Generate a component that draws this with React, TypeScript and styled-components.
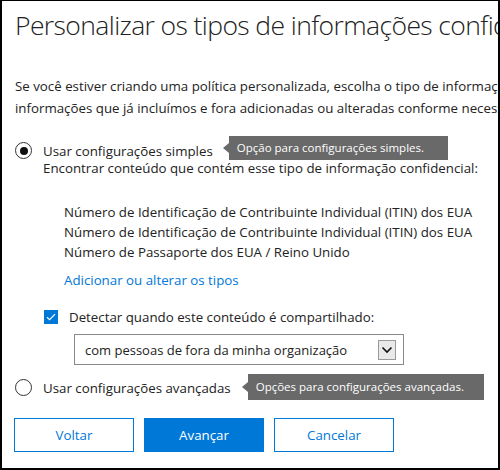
import React from "react";
import styled, { createGlobalStyle } from "styled-components";

const GlobalStyle = createGlobalStyle`
  html, body { margin: 0; padding: 0; background: #fff; }
  body { font-family: "Open Sans", "Noto Sans", sans-serif; overflow: hidden; }
  * { box-sizing: border-box; }
`;

const Frame = styled.div`
  width: 500px;
  height: 470px;
  border: 2px solid #000;
  border-top-width: 1px;
  background: #fff;
  overflow: hidden;
  padding-left: 13px;
  color: #222;
  font-size: 13.3px;
`;

const Title = styled.h1`
  margin: 4px 0 0 0;
  font-weight: 300;
  font-size: 26.5px;
  letter-spacing: -0.6px;
  line-height: 40px;
  white-space: nowrap;
  color: #222;
`;

const Intro = styled.p`
  margin: 30px 0 0 0;
  line-height: 22px;
  white-space: nowrap;
`;

const Line = styled.span`
  display: block;
`;

const OptionBlock = styled.div<{ $top: number }>`
  display: flex;
  align-items: flex-start;
  gap: 11px;
  margin-top: ${(p) => p.$top}px;
`;

const Radio = styled.span<{ $checked?: boolean }>`
  flex: none;
  width: 17px;
  height: 17px;
  border: 1.5px solid #333;
  border-radius: 50%;
  display: flex;
  align-items: center;
  justify-content: center;
  &::after {
    content: "";
    display: ${(p) => (p.$checked ? "block" : "none")};
    width: 8px;
    height: 8px;
    border-radius: 50%;
    background: #111;
  }
`;

const OptionBody = styled.div`
  display: flex;
  flex-direction: column;
  align-items: flex-start;
`;

const OptionLabel = styled.span`
  position: relative;
  line-height: 18px;
  white-space: nowrap;
`;

const Tooltip = styled.span<{ $gap: number; $h: number; $shift: number; $padRight: number }>`
  position: absolute;
  left: calc(100% + ${(p) => p.$gap}px);
  top: 50%;
  transform: translateY(calc(-50% + ${(p) => p.$shift}px));
  height: ${(p) => p.$h}px;
  padding: 0 ${(p) => p.$padRight}px 0 8px;
  background: #696969;
  color: #fff;
  font-size: 11.5px;
  line-height: ${(p) => p.$h}px;
  white-space: nowrap;
  &::before {
    content: "";
    position: absolute;
    left: -6px;
    top: 50%;
    transform: translateY(-50%);
    border-style: solid;
    border-width: 5px 6px 5px 0;
    border-color: transparent #696969 transparent transparent;
  }
`;

const Description = styled.span`
  line-height: 16px;
  white-space: nowrap;
`;

const TypeList = styled.ul`
  list-style: none;
  margin: 26px 0 0 21px;
  padding: 0;
  line-height: 20px;
  white-space: nowrap;
`;

const Link = styled.a`
  margin: 8px 0 0 21px;
  line-height: 20px;
  color: #0078d7;
  text-decoration: none;
`;

const CheckRow = styled.label`
  display: flex;
  align-items: center;
  gap: 11px;
  margin: 17px 0 0 1px;
  line-height: 20px;
  white-space: nowrap;
`;

const CheckBox = styled.span`
  width: 14px;
  height: 14px;
  background: #0078d7;
  display: flex;
  align-items: center;
  justify-content: center;
`;

const Select = styled.div`
  margin: 7px 0 0 31px;
  width: 330px;
  height: 31px;
  border: 1px solid #8a8a8a;
  display: flex;
  align-items: center;
  justify-content: space-between;
  padding: 0 7px 0 10px;
  font-size: 13px;
  white-space: nowrap;
`;

const SelectArrow = styled.span`
  width: 18px;
  height: 20px;
  border: 1px solid #9a9a9a;
  background: #e9e9e9;
  display: flex;
  align-items: center;
  justify-content: center;
`;

const ButtonRow = styled.div`
  display: flex;
  gap: 10px;
  margin: 21px 0 0 -1px;
`;

const Button = styled.button<{ $primary?: boolean }>`
  width: 120px;
  height: 34px;
  border: 1px solid #0078d7;
  background: ${(p) => (p.$primary ? "#0078d7" : "#fff")};
  color: ${(p) => (p.$primary ? "#fff" : "#0078d7")};
  font-family: "Open Sans", "Noto Sans", sans-serif;
  font-size: 13.3px;
  padding: 0;
  cursor: pointer;
`;

export default function App() {
  return (
    <>
      <GlobalStyle />
      <Frame>
        <Title>Personalizar os tipos de informações confidenciais</Title>
        <Intro>
          <Line>
            Se você estiver criando uma política personalizada, escolha o tipo de informação confidencial
          </Line>
          <Line>
            informações que já incluímos e fora adicionadas ou alteradas conforme necessário.
          </Line>
        </Intro>

        <OptionBlock $top={23}>
          <Radio $checked />
          <OptionBody>
            <OptionLabel>
              Usar configurações simples
              <Tooltip $gap={16} $h={24} $shift={-3} $padRight={24}>
                Opção para configurações simples.
              </Tooltip>
            </OptionLabel>
            <Description>
              Encontrar conteúdo que contém esse tipo de informação confidencial:
            </Description>
            <TypeList>
              <li>Número de Identificação de Contribuinte Individual (ITIN) dos EUA</li>
              <li>Número de Identificação de Contribuinte Individual (ITIN) dos EUA</li>
              <li>Número de Passaporte dos EUA / Reino Unido</li>
            </TypeList>
            <Link href="#">Adicionar ou alterar os tipos</Link>
            <CheckRow>
              <CheckBox>
                <svg width="10" height="8" viewBox="0 0 10 8">
                  <path d="M1 4.2 L3.6 6.6 L9 1.2" fill="none" stroke="#fff" strokeWidth="1.2" />
                </svg>
              </CheckBox>
              Detectar quando este conteúdo é compartilhado:
            </CheckRow>
            <Select>
              <span>com pessoas de fora da minha organização</span>
              <SelectArrow>
                <svg width="12" height="8" viewBox="0 0 12 8">
                  <path d="M1.5 1.5 L6 6 L10.5 1.5" fill="none" stroke="#111" strokeWidth="1.6" />
                </svg>
              </SelectArrow>
            </Select>
          </OptionBody>
        </OptionBlock>

        <OptionBlock $top={14}>
          <Radio />
          <OptionBody>
            <OptionLabel>
              Usar configurações avançadas
              <Tooltip $gap={17} $h={26} $shift={-1} $padRight={20}>
                Opções para configurações avançadas.
              </Tooltip>
            </OptionLabel>
          </OptionBody>
        </OptionBlock>

        <ButtonRow>
          <Button>Voltar</Button>
          <Button $primary>Avançar</Button>
          <Button>Cancelar</Button>
        </ButtonRow>
      </Frame>
    </>
  );
}
